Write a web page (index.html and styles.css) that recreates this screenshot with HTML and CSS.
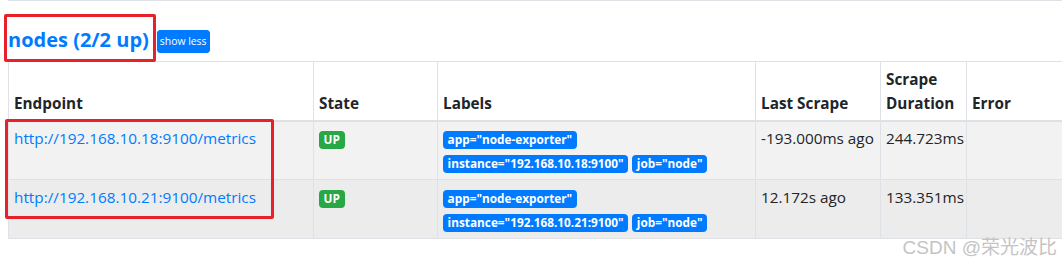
FILE: index.html
```html
<!DOCTYPE html>
<html>
<head>
<meta charset="utf-8">
<link rel="stylesheet" href="styles.css">
</head>
<body>
<div class="page">
  <div class="rule"></div>
  <div class="job-head">
    <h2 class="job-title"><a href="#">nodes (2/2 up)</a></h2>
    <button class="btn-xs">show less</button>
  </div>
  <table class="targets">
    <colgroup>
      <col class="c-endpoint"><col class="c-state"><col class="c-labels"><col class="c-last"><col class="c-dur"><col class="c-err">
    </colgroup>
    <thead>
      <tr>
        <th>Endpoint</th>
        <th>State</th>
        <th>Labels</th>
        <th>Last Scrape</th>
        <th>Scrape Duration</th>
        <th>Error</th>
      </tr>
    </thead>
    <tbody>
      <tr class="odd">
        <td><a href="#" class="endpoint">http://192.168.10.18:9100/metrics</a></td>
        <td><span class="badge badge-up">UP</span></td>
        <td>
          <div class="label-line"><span class="badge badge-label">app="node-exporter"</span></div>
          <div class="label-line"><span class="badge badge-label">instance="192.168.10.18:9100"</span><span class="badge badge-label">job="node"</span></div>
        </td>
        <td>-193.000ms ago</td>
        <td>244.723ms</td>
        <td></td>
      </tr>
      <tr class="even">
        <td><a href="#" class="endpoint">http://192.168.10.21:9100/metrics</a></td>
        <td><span class="badge badge-up">UP</span></td>
        <td>
          <div class="label-line"><span class="badge badge-label">app="node-exporter"</span></div>
          <div class="label-line"><span class="badge badge-label">instance="192.168.10.21:9100"</span><span class="badge badge-label">job="node"</span></div>
        </td>
        <td>12.172s ago</td>
        <td>133.351ms</td>
        <td></td>
      </tr>
    </tbody>
  </table>
</div>
<div class="mark mark-title"></div>
<div class="mark mark-endpoints"></div>
<div class="watermark">CSDN @荣光波比</div>
</body>
</html>
```
FILE: styles.css
```css
html, body {
  margin: 0;
  padding: 0;
  background: #fff;
  overflow: hidden;
}
body {
  width: 1062px;
  height: 267px;
  position: relative;
  font-family: "Open Sans", "Noto Sans", "Liberation Sans", sans-serif;
  font-size: 15.3px;
  line-height: 24px;
  color: #212529;
}
.page {
  padding-left: 8px;
}
.rule {
  border-top: 1px solid #dee2e6;
  width: 1100px;
}
.job-head {
  display: flex;
  align-items: center;
  gap: 8px;
  height: 42px;
  padding-top: 18px;
}
.job-title {
  margin: 0;
  font-size: 20px;
  line-height: 24px;
  font-weight: 700;
}
.job-title a {
  color: #007bff;
  text-decoration: none;
}
.btn-xs {
  font-family: inherit;
  font-size: 10.4px;
  line-height: 17px;
  padding: 2px 2px;
  border: 1px solid #007bff;
  border-radius: 3px;
  background: #007bff;
  color: #fff;
  margin-top: 2px;
}
.targets {
  border-collapse: collapse;
  table-layout: fixed;
  width: 1140px;
}
.c-endpoint { width: 305px; }
.c-state { width: 124px; }
.c-labels { width: 318px; }
.c-last { width: 125px; }
.c-dur { width: 86px; }
.c-err { width: 182px; }
.targets th, .targets td {
  border: 1px solid #dee2e6;
  padding: 4.8px 5px;
  text-align: left;
  vertical-align: top;
}
.targets th {
  vertical-align: bottom;
  font-weight: 700;
  border-bottom-width: 2px;
}
.targets tr.odd td { background: #f2f2f2; }
.targets tr.even td { background: #ececec; }
.endpoint {
  color: #007bff;
  text-decoration: none;
}
.badge {
  display: inline-block;
  font-size: 11.8px;
  font-weight: 700;
  line-height: 1;
  padding: 3.3px 4.6px;
  border-radius: 4px;
  color: #fff;
  white-space: nowrap;
  vertical-align: baseline;
}
.badge-up {
  background: #28a745;
  margin-top: 3px;
}
.badge-label {
  background: #007bff;
  margin-right: 4px;
}
.label-line {
  line-height: 24px;
  height: 24px;
}
.mark {
  position: absolute;
  border: 3px solid #e8202a;
  border-radius: 2px;
  box-sizing: border-box;
}
.mark-title {
  left: 4px;
  top: 14px;
  width: 152px;
  height: 48px;
}
.mark-endpoints {
  left: 5px;
  top: 119px;
  width: 269px;
  height: 100px;
}
.watermark {
  position: absolute;
  right: 5px;
  top: 236px;
  font-family: "Liberation Sans", "Noto Sans CJK SC", sans-serif;
  font-size: 19px;
  line-height: 24px;
  color: #c4c4c4;
}
```
